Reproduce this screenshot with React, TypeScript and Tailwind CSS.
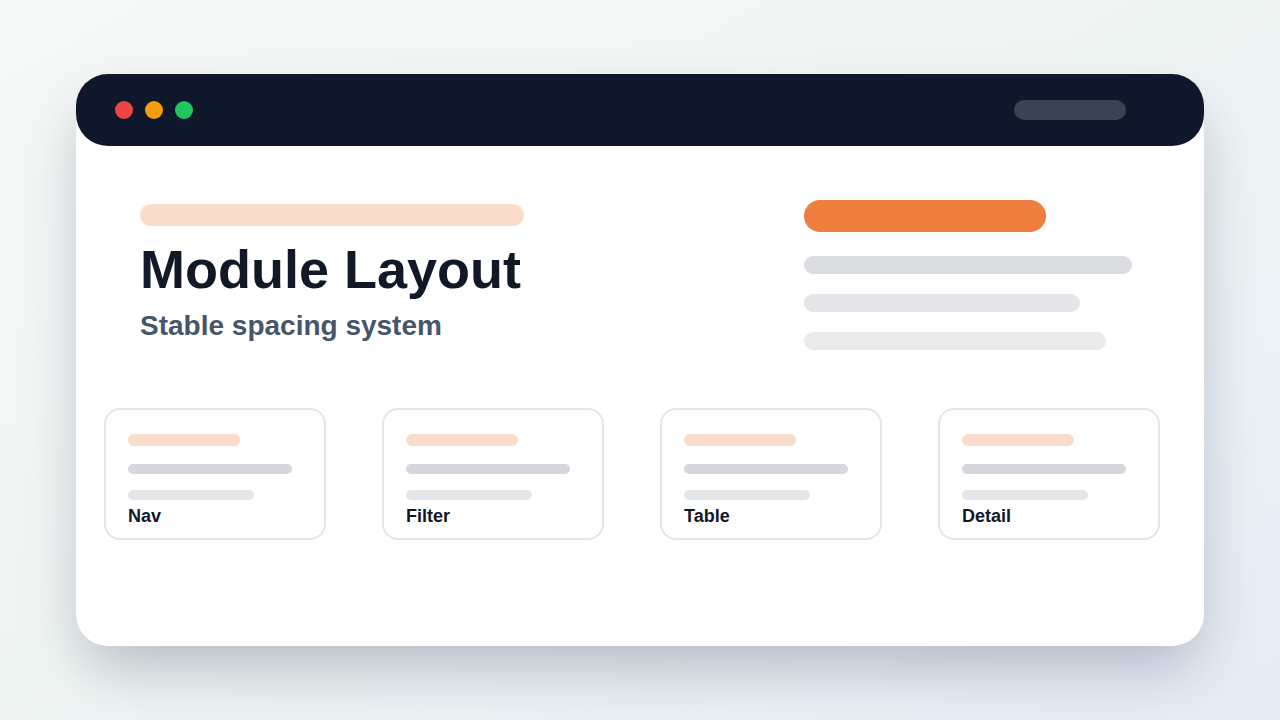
const CARDS = ["Nav", "Filter", "Table", "Detail"];

function ModuleCard({ label }: { label: string }) {
  return (
    <div className="flex h-[132px] w-[222px] flex-col rounded-[16px] border-2 border-[#e3e5e8] bg-white px-[22px] pt-[24px]">
      <div className="h-[12px] w-[112px] rounded-full bg-[#fadccb]" />
      <div className="mt-[18px] h-[10px] w-[164px] rounded-full bg-[#d5d7dc]" />
      <div className="mt-[16px] h-[10px] w-[126px] rounded-full bg-[#e4e5e8]" />
      <div className="mt-[4px] text-[18px] font-bold leading-[24px] text-[#111827]">{label}</div>
    </div>
  );
}

export default function App() {
  return (
    <div
      className="h-[720px] w-[1280px] overflow-hidden bg-gradient-to-br from-[#f7f8f8] via-[#eff5f3] to-[#e6ecf7] pl-[76px] pt-[74px]"
      style={{ fontFamily: '"Liberation Sans", Arial, sans-serif' }}
    >
      <div className="h-[572px] w-[1128px] rounded-[32px] bg-white shadow-[0_28px_60px_-8px_rgba(30,41,70,0.28)]">
        {/* title bar */}
        <div className="flex h-[72px] items-center justify-between rounded-[32px] bg-[#0f172a] pl-[39px] pr-[78px]">
          <div className="flex gap-[12px]">
            <span className="h-[18px] w-[18px] rounded-full bg-[#ef4444]" />
            <span className="h-[18px] w-[18px] rounded-full bg-[#f59e0b]" />
            <span className="h-[18px] w-[18px] rounded-full bg-[#22c55e]" />
          </div>
          <div className="h-[20px] w-[112px] rounded-full bg-[#3b4352]" />
        </div>

        {/* hero */}
        <div className="flex pl-[64px] pt-[54px]">
          <div className="w-[664px]">
            <div className="mt-[4px] h-[22px] w-[384px] rounded-full bg-[#fadccb]" />
            <h1 className="mt-[16px] text-[54px] font-bold leading-[54px] text-[#111827]">Module Layout</h1>
            <p className="mt-[16px] text-[28px] font-bold leading-[28px] text-[#475569]">Stable spacing system</p>
          </div>
          <div className="flex flex-col">
            <div className="h-[32px] w-[242px] rounded-full bg-[#ef7f3f]" />
            <div className="mt-[24px] h-[18px] w-[328px] rounded-full bg-[#dadce0]" />
            <div className="mt-[20px] h-[18px] w-[276px] rounded-full bg-[#e3e5e8]" />
            <div className="mt-[20px] h-[18px] w-[302px] rounded-full bg-[#e9eaec]" />
          </div>
        </div>

        {/* modules */}
        <div className="mt-[58px] flex gap-[56px] pl-[28px]">
          {CARDS.map((c) => (
            <ModuleCard key={c} label={c} />
          ))}
        </div>
      </div>
    </div>
  );
}
